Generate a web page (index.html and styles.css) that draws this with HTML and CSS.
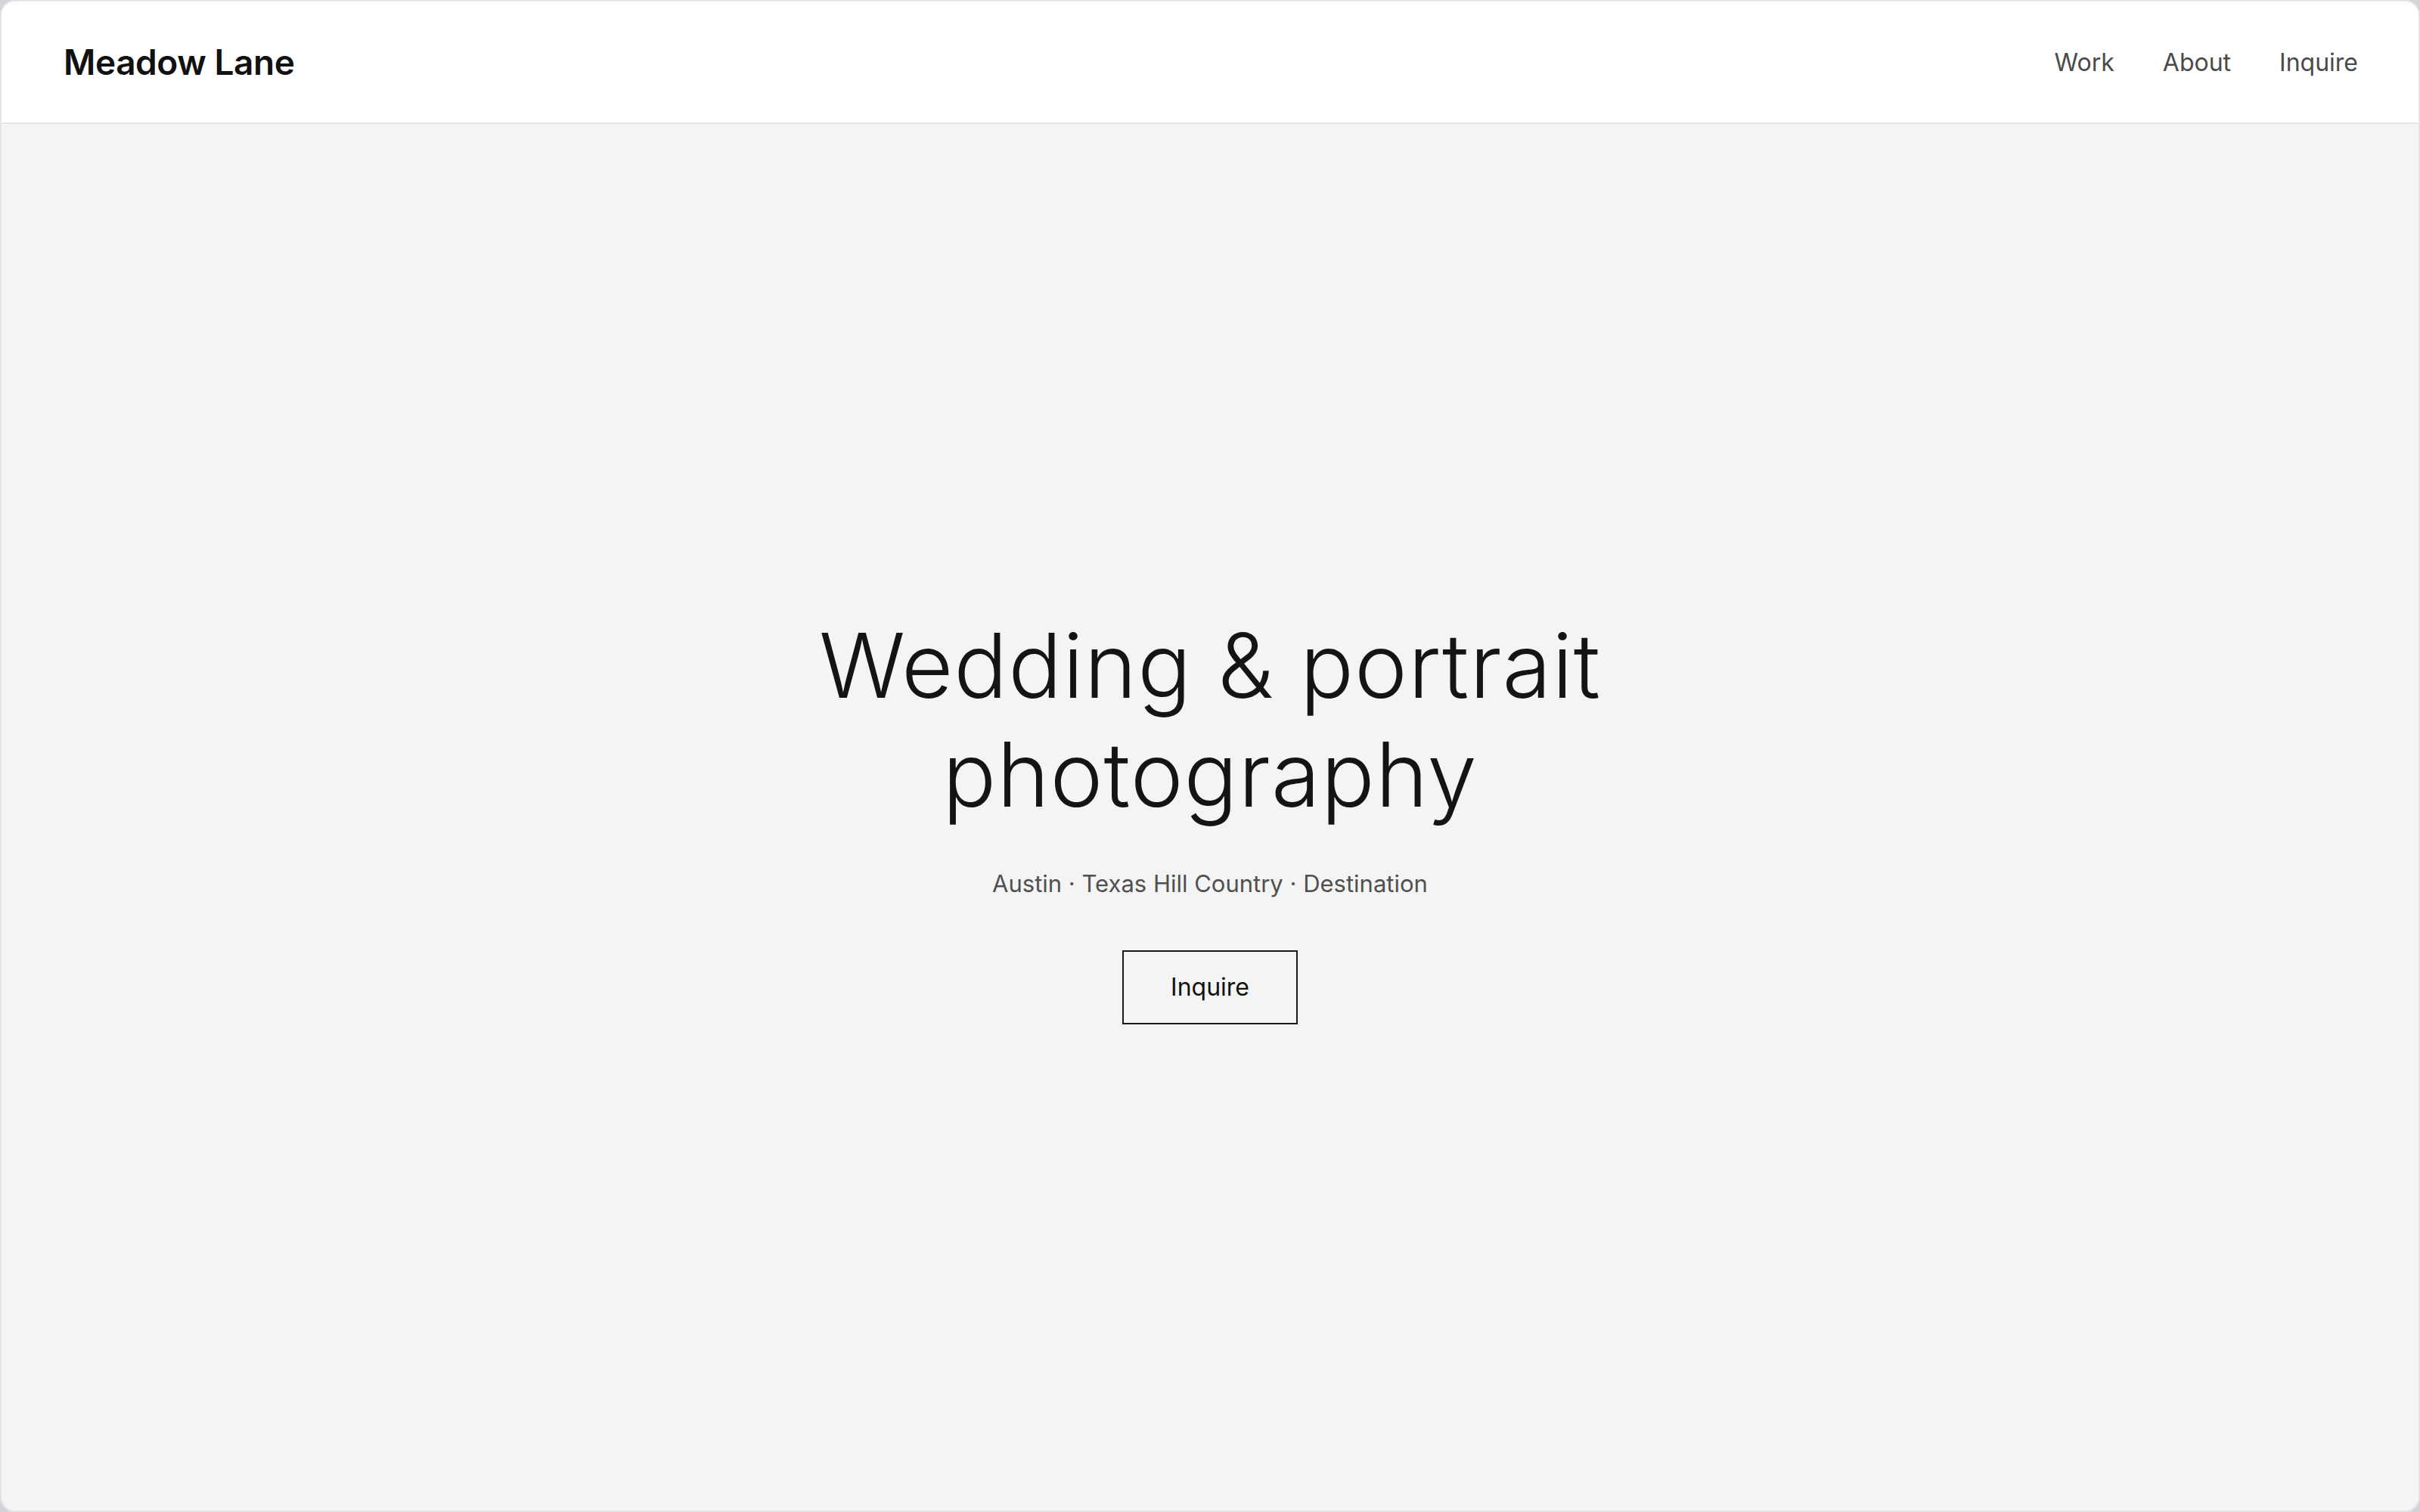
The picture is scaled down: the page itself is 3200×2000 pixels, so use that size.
FILE: index.html
```html
<!DOCTYPE html>
<html lang="en">
<head>
	<meta charset="UTF-8">
	<title>Meadow Lane</title>
	<link rel="stylesheet" href="styles.css">
</head>
<body>
<div class="window">
	<header class="site-header">
		<a class="logo" href="#">Meadow Lane</a>
		<nav class="nav">
			<a href="#">Work</a>
			<a href="#">About</a>
			<a href="#">Inquire</a>
		</nav>
	</header>

	<main class="hero">
		<h1>Wedding &amp; portrait<br>photography</h1>
		<p class="places">Austin · Texas Hill Country · Destination</p>
		<a class="btn" href="#">Inquire</a>
	</main>
</div>
</body>
</html>
```

FILE: styles.css
```css
html, body{
	margin: 0;
	height: 100%;
}
body{
	background: #d4d4d8;
	font-family: "Inter", "Liberation Sans", sans-serif;
	color: #111;
}

/* the browser-like frame round the page */
.window{
	box-sizing: border-box;
	height: 100%;
	display: flex;
	flex-direction: column;
	background: #f4f4f4;
	border: 2px solid #e4e4e8;
	border-radius: 20px;
	overflow: hidden;
}

.site-header{
	flex: none;
	height: 160px;
	display: flex;
	align-items: center;
	justify-content: space-between;
	padding: 0 80px 0 82px;
	background: #fff;
	border-bottom: 2px solid #e6e6e6;
}
.logo{
	font-size: 46px;
	font-weight: 600;
	letter-spacing: -0.01em;
	color: #111;
	text-decoration: none;
}
.nav{
	display: flex;
	gap: 64px;
}
.nav a{
	font-size: 32px;
	color: #4a4a4a;
	text-decoration: none;
}

.hero{
	flex: 1;
	display: flex;
	flex-direction: column;
	align-items: center;
	justify-content: center;
	text-align: center;
}
.hero h1{
	margin: 0;
	font-size: 118px;
	font-weight: 300;
	line-height: 144px;
	letter-spacing: 0.008em;
	color: #141414;
}
.places{
	margin: 54px 0 0;
	font-size: 31px;
	color: #505050;
}
.btn{
	margin-top: 70px;
	padding: 23px 62px;
	font-size: 32px;
	line-height: 48px;
	color: #111;
	text-decoration: none;
	border: 2px solid #1a1a1a;
}
```
